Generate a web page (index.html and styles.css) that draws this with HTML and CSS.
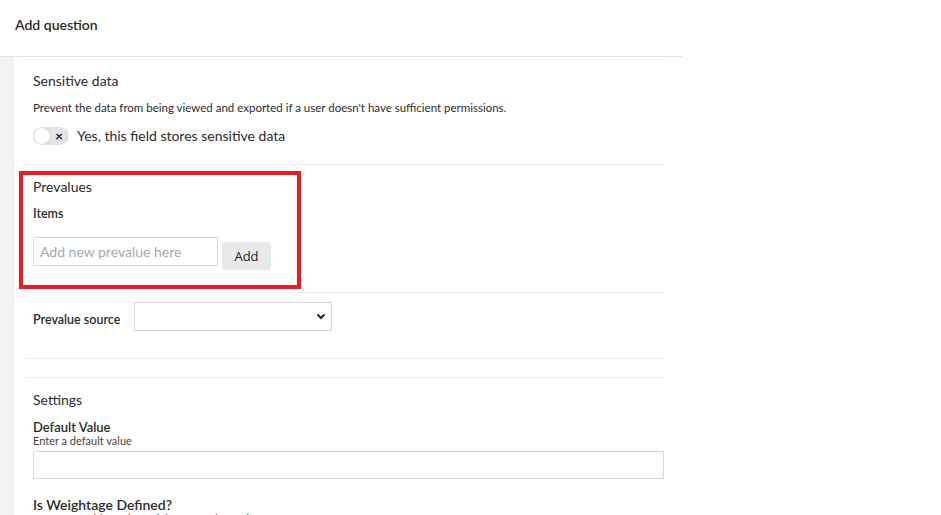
FILE: index.html
```html
<!DOCTYPE html>
<html lang="en">
<head>
    <meta charset="UTF-8" />
    <title>Add question</title>
    <link rel="stylesheet" href="styles.css">
</head>
<body>

<div class="header">Add question</div>

<div class="main">
    <div class="strip"></div>
    <div class="panel">

        <div class="section sensitive">
            <div class="title">Sensitive data</div>
            <div class="desc">Prevent the data from being viewed and exported if a user doesn't have sufficient permissions.</div>
            <div class="toggle-row">
                <span class="toggle"><span class="knob"></span><span class="x">×</span></span>
                <span>Yes, this field stores sensitive data</span>
            </div>
        </div>

        <div class="section prevalues">
            <div class="highlight">
                <div class="title">Prevalues</div>
                <div class="label">Items</div>
                <div class="add-row">
                    <input type="text" placeholder="Add new prevalue here">
                    <button>Add</button>
                </div>
            </div>
        </div>

        <div class="section source">
            <span class="label">Prevalue source</span>
            <span class="select-wrap">
                <select></select>
                <svg class="chev" width="10" height="7" viewBox="0 0 10 7"><path d="M1.5 1.5 L5 5 L8.5 1.5" fill="none" stroke="#222" stroke-width="2"/></svg>
            </span>
        </div>

        <div class="section empty"></div>

        <div class="section settings">
            <div class="title">Settings</div>
            <div class="label field-name">Default Value</div>
            <div class="hint">Enter a default value</div>
            <input type="text" class="wide">
            <div class="label field-name weight">Is Weightage Defined?</div>
            <div class="hint">If true, you able to the weightage for the option</div>
        </div>

    </div>
</div>

</body>
</html>
```

FILE: styles.css
```css
body {
    margin: 0;
    font-family: Lato, "Open Sans", sans-serif;
    color: #2b2b2e;
    background: #fff;
    overflow: hidden;
}

.header {
    width: 667px;
    height: 41px;
    padding: 15px 0 0 15px;
    line-height: 20px;
    font-size: 14px;
    font-weight: 600;
    border-bottom: 1px solid #e3e3e3;
}

.main {
    display: flex;
    width: 682px;
}

.strip {
    width: 14px;
    background: #f4f2f4;
    flex-shrink: 0;
}

.panel {
    flex: 1;
    padding: 2px 18px 0 11px;
}

.section {
    border-top: 1px solid #eeeeee;
    padding-left: 8px;
}

.title {
    font-size: 14px;
    line-height: 20px;
}

.desc {
    font-size: 11.5px;
    line-height: 16px;
    margin-top: 9px;
}

.sensitive {
    padding-top: 11px;
    padding-bottom: 18px;
}

.toggle-row {
    display: flex;
    align-items: center;
    gap: 8px;
    margin-top: 10px;
    font-size: 14px;
    line-height: 20px;
}

.toggle {
    position: relative;
    width: 36px;
    height: 18px;
    border-radius: 9px;
    background: #e4e4e6;
}

.toggle .knob {
    position: absolute;
    left: 1px;
    top: 1px;
    width: 16px;
    height: 16px;
    border-radius: 50%;
    background: #fff;
    box-shadow: 0 0 1px rgba(0, 0, 0, 0.3);
}

.toggle .x {
    position: absolute;
    right: 6px;
    top: 0;
    font-size: 14px;
    line-height: 17px;
    font-weight: bold;
    color: #1b264f;
}

.prevalues {
    padding-top: 6px;
    padding-bottom: 3px;
}

.highlight {
    width: 264px;
    margin-left: -14px;
    padding: 2px 0 15px 10px;
    border: 4px solid #ed1c24;
}

.label {
    font-size: 12.5px;
    font-weight: 600;
    line-height: 18px;
}

.highlight .label {
    margin-top: 8px;
}

.add-row {
    display: flex;
    align-items: flex-start;
    gap: 4px;
    margin-top: 14px;
}

.add-row input {
    box-sizing: border-box;
    width: 185px;
    height: 29px;
    border: 1px solid #d8d8d8;
    padding: 0 6px;
    font-family: Lato, sans-serif;
    font-size: 14px;
    color: #333;
}

.add-row input::placeholder {
    color: #a8a8a8;
}

.add-row button {
    margin-top: 5px;
    width: 49px;
    height: 28px;
    border: none;
    border-radius: 3px;
    background: #e9e9eb;
    font-family: "Open Sans", sans-serif;
    font-size: 13px;
    color: #222;
}

.source {
    display: flex;
    align-items: flex-start;
    padding-top: 9px;
    padding-bottom: 27px;
}

.source .label {
    width: 101px;
    margin-top: 9px;
}

.select-wrap {
    position: relative;
}

.select-wrap select {
    display: block;
    width: 198px;
    height: 29px;
    border: 1px solid #d8d8d8;
    background: #fff;
    appearance: none;
    border-radius: 0;
}

.chev {
    position: absolute;
    right: 6px;
    top: 11px;
}

.empty {
    height: 18px;
}

.settings {
    padding-top: 12px;
}

.field-name {
    font-size: 13px;
    line-height: 16px;
    margin-top: 9px;
}

.hint {
    font-size: 11px;
    line-height: 12px;
    color: #444;
}

.wide {
    display: block;
    box-sizing: border-box;
    width: 631px;
    height: 28px;
    margin-top: 4px;
    border: 1px solid #d8d8d8;
}

.weight {
    margin-top: 18px;
    font-size: 14px;
    line-height: 16px;
}
```
